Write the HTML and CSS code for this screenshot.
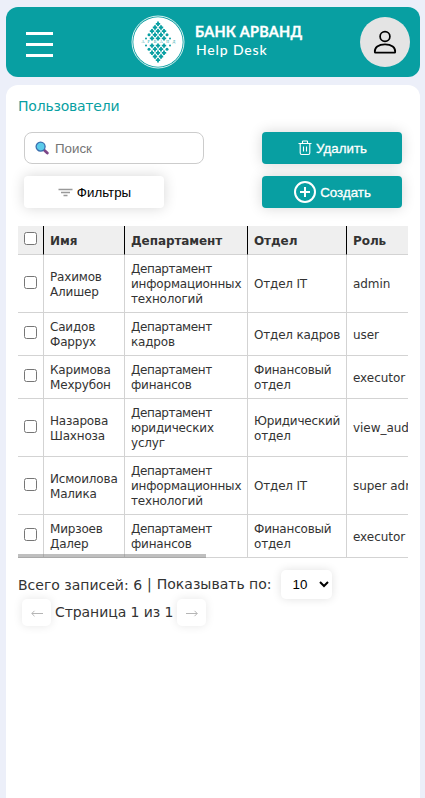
FILE: index.html
```html
<!DOCTYPE html>
<html lang="ru">
<head>
<meta charset="utf-8">
<title>Help Desk</title>
<link rel="stylesheet" href="styles.css">
</head>
<body>
<header class="topbar">
  <div class="burger"><span></span><span></span><span></span></div>
  <div class="brand">
    <svg class="emblem" viewBox="-27 -27 54 54" width="54" height="54">
      <defs>
        <path id="d" d="M-.9-2.2H.9V-.9H2.2V.9H.9V2.2H-.9V.9H-2.2V-.9H-.9Z"/>
        <g id="r2"><use href="#d" x="-3"/><use href="#d" x="3"/></g>
        <g id="r3"><use href="#d" x="-6"/><use href="#d"/><use href="#d" x="6"/></g>
        <g id="r4"><use href="#r2"/><circle cx="-9" r="1.5"/><circle cx="9" r="1.5"/></g>
        <g id="r5"><use href="#r3"/><circle cx="-12" r="1"/><circle cx="12" r="1"/></g>
      </defs>
      <circle r="26" fill="none" stroke="#d9f0f0" stroke-width="1"/>
      <circle r="24.7" fill="#fff"/>
      <g fill="#089fa2"><g><use href="#d" y="-18.2"/><use href="#r2" y="-14.5"/><use href="#r3" y="-10.8"/><use href="#r4" y="-7.2"/><use href="#r5" y="-3.6"/></g><g transform="scale(1 -1)"><use href="#d" y="-18.2"/><use href="#r2" y="-14.5"/><use href="#r3" y="-10.8"/><use href="#r4" y="-7.2"/><use href="#r5" y="-3.6"/></g></g>
      <text class="emblem-text" x="-15 -9.3 -3 3.2 9.6 15.8" y="1.4">АРВАНД</text>
    </svg>
    <div class="brand-text"><span class="bank">БАНК АРВАНД</span><span class="desk">Help Desk</span></div>
  </div>
  <div class="avatar">
    <svg viewBox="0 0 24 24" width="24" height="24" fill="none" stroke="#000" stroke-width="1.7"><circle cx="12" cy="6.500" r="4.900"/><path d="M1.800 22.200C1.200 17.600 5.500 14.300 12 14.300S22.800 17.600 22.200 22.200Q22.200 22.700 21.500 22.700H2.500Q1.800 22.700 1.800 22.200Z"/></svg>
  </div>
</header>
<main class="panel">
  <h1 class="title">Пользователи</h1>
  <div class="tools">
    <div class="search">
      <svg viewBox="0 0 14 14" width="14" height="14"><path d="M9.300 9.300L12.300 12.100" stroke="#7d4587" stroke-width="2.800" stroke-linecap="round"/><circle cx="5.600" cy="5.600" r="4.500" fill="#5acbea" stroke="#3a6fae" stroke-width="1.300"/></svg>
      <input class="search-input" type="text" placeholder="Поиск">
    </div>
    <button class="btn primary">
      <svg viewBox="0 0 14 16" width="14" height="16" fill="none" stroke="#fff" stroke-width="1.100"><path d="M.5 3.500H13.500M4.500 3.500V1.500Q4.500 1 5 1H9Q9.500 1 9.500 1.500V3.500M2.200 3.500V13Q2.200 14.500 3.700 14.500H10.300Q11.800 14.500 11.800 13V3.500M5.500 6.500V11.500M8.500 6.500V11.500"/></svg>
      <span>Удалить</span>
    </button>
    <button class="btn light">
      <svg viewBox="0 0 15 9" width="15" height="9" stroke="#999" stroke-width="1.500"><path d="M.5 1.500H14.500M3 4.500H12M5.500 7.500H9.500"/></svg>
      <span>Фильтры</span>
    </button>
    <button class="btn primary">
      <svg viewBox="0 0 22 22" width="22" height="22" fill="none" stroke="#fff" stroke-width="2"><circle cx="11" cy="11" r="10"/><path d="M6 11H16M11 6V16"/></svg>
      <span>Создать</span>
    </button>
  </div>
  <div class="table-wrap">
    <table>
      <colgroup><col class="c-check"><col class="c-name"><col class="c-dep"><col class="c-unit"><col class="c-role"></colgroup>
      <thead><tr><th><input type="checkbox"></th><th>Имя</th><th>Департамент</th><th>Отдел</th><th>Роль</th></tr></thead>
      <tbody>
        <tr class="tall"><td><input type="checkbox"></td><td>Рахимов<br>Алишер</td><td><span class="dep">Департамент</span><br>информационных<br>технологий</td><td>Отдел IT</td><td>admin</td></tr>
        <tr><td><input type="checkbox"></td><td>Саидов<br>Фаррух</td><td><span class="dep">Департамент</span><br>кадров</td><td>Отдел кадров</td><td>user</td></tr>
        <tr><td><input type="checkbox"></td><td>Каримова<br>Мехрубон</td><td><span class="dep">Департамент</span><br>финансов</td><td>Финансовый<br>отдел</td><td>executor</td></tr>
        <tr class="tall"><td><input type="checkbox"></td><td>Назарова<br>Шахноза</td><td><span class="dep">Департамент</span><br>юридических<br>услуг</td><td>Юридический<br>отдел</td><td>view_audit</td></tr>
        <tr class="tall"><td><input type="checkbox"></td><td>Исмоилова<br>Малика</td><td><span class="dep">Департамент</span><br>информационных<br>технологий</td><td>Отдел IT</td><td>super admin</td></tr>
        <tr><td><input type="checkbox"></td><td>Мирзоев<br>Далер</td><td><span class="dep">Департамент</span><br>финансов</td><td>Финансовый<br>отдел</td><td>executor</td></tr>
      </tbody>
    </table>
    <div class="scroll-thumb"></div>
  </div>
  <div class="pager">
    <div class="pager-row"><span class="total">Всего записей: 6</span><span class="bar">|</span><span class="per">Показывать по:</span>
      <span class="select">10<svg viewBox="0 0 10 7" width="10" height="7" fill="none" stroke="#000" stroke-width="2"><path d="M1 1L5 5L9 1"/></svg></span></div>
    <div class="pager-row second"><span class="arrow"><svg viewBox="0 0 12 7" width="12" height="7"><path d="M12 3.500H.8M3.500 .8L.8 3.500L3.500 6.200"/></svg></span><span class="page">Страница 1 из 1</span><span class="arrow"><svg viewBox="0 0 12 7" width="12" height="7"><path d="M0 3.500H11.200M8.500 .8L11.200 3.500L8.500 6.200"/></svg></span></div>
  </div>
</main>
</body>
</html>
```
FILE: styles.css
```css
* { box-sizing: border-box; }
html, body { height: 100%; }
body { margin: 0; padding: 7px 5px 0 6px; background: #eceff9; overflow: hidden; font-family: Verdana, "DejaVu Sans", sans-serif; color: #333; }
.topbar { height: 70px; background: #089fa2; border-radius: 12px; display: flex; align-items: center; padding: 0 10px 0 20px; }
.burger { display: flex; flex-direction: column; gap: 8px; width: 27px; margin-top: 4px; }
.burger span { height: 3px; background: #fff; }
.brand { display: flex; align-items: center; gap: 10px; margin-left: 78px; }
.emblem { display: block; }
.emblem-text { font: 4px "Liberation Serif", serif; fill: #089fa2; text-anchor: middle; }
.brand-text { display: flex; flex-direction: column; color: #fff; width: 107px; white-space: nowrap; margin-top: -3px; }
.bank { font: 700 14.500px/17px Lato, sans-serif; letter-spacing: .2px; -webkit-text-stroke: .3px #fff; }
.desk { font: 500 14px/19px Lato, sans-serif; letter-spacing: .85px; padding-left: 1px; }
.avatar { margin-left: auto; width: 50px; height: 50px; border-radius: 50%; background: #e4e4e4; display: flex; align-items: center; justify-content: center; }
.panel { margin-top: 8px; height: 740px; background: #fff; border-radius: 12px; padding: 12px 12px 0; }
.title { margin: 0; font-size: 14px; line-height: 18px; font-weight: 400; letter-spacing: -.22px; color: #089fa2; }
.tools { display: grid; grid-template-columns: 180px 140px; justify-content: space-between; gap: 12px 0; padding: 17px 6px 0; }
.search { height: 32px; border: 1px solid #ccc; border-radius: 8px; display: flex; align-items: center; padding-left: 10px; gap: 6px; }
.search-input { border: 0; outline: 0; padding: 0; width: 130px; font: 13.333px "Liberation Sans", sans-serif; background: none; }
.search-input::placeholder { color: #757575; }
.btn { width: 140px; height: 32px; border: 0; border-radius: 4px; display: flex; align-items: center; justify-content: center; gap: 4px; padding: 0 0 0 1px; font: 13.333px "Liberation Sans", sans-serif; box-shadow: 0 0 14px rgba(0,0,0,.16); }
.primary { background: #089fa2; color: #fff; -webkit-text-stroke: .3px #fff; }
.light { background: #fff; color: #000; }
.table-wrap { margin-top: 18px; width: 390px; overflow: hidden; display: grid; }
.table-wrap > * { grid-area: 1 / 1; }
table { width: 450px; table-layout: fixed; border-collapse: separate; border-spacing: 0; font-size: 12px; line-height: 15px; letter-spacing: -.18px; }
.c-check { width: 26px; } .c-name { width: 81px; } .c-dep { width: 123px; } .c-unit { width: 99px; } .c-role { width: 121px; }
th, td { padding: 2px 0 0 6px; text-align: left; vertical-align: middle; border-right: 1px solid #d3d3d3; border-bottom: 1px solid #d3d3d3; white-space: nowrap; }
th { height: 29px; background: #efefef; border-right-color: #000; letter-spacing: -.08px; }
td { height: 43px; }
.dep { letter-spacing: -.4px; }
td:nth-child(4) { letter-spacing: -.2px; }
td:nth-child(5) { letter-spacing: -.05px; }
.tall td { height: 58px; }
input[type="checkbox"] { display: block; margin: 0; width: 13px; height: 13px; position: relative; top: -3px; }
.tall input[type="checkbox"] { top: -2px; }
.scroll-thumb { align-self: end; width: 188px; height: 4px; background: rgba(128,128,128,.5); z-index: 1; }
.pager { margin-top: 12px; font-size: 14px; }
.pager-row { display: flex; align-items: center; height: 29px; white-space: nowrap; }
.bar { margin: 0 5px 0 5px; }
.bar, .per { padding-bottom: 2px; }
.select { margin-left: 9px; width: 51px; height: 29px; border-radius: 5px; box-shadow: 0 0 10px rgba(0,0,0,.12); display: flex; align-items: center; justify-content: space-between; padding: 0 3px 0 12px; font: 13.333px "Liberation Sans", sans-serif; color: #000; }
.second { height: 27px; padding-left: 4px; gap: 4px; }
.page { letter-spacing: -.07px; padding-bottom: 2px; }
.arrow { width: 29px; height: 27px; border-radius: 5px; box-shadow: 0 0 10px rgba(0,0,0,.1); display: flex; align-items: center; justify-content: center; padding-top: 2px; }
.arrow svg { fill: none; stroke: #b5b5b5; stroke-width: 1; }
```
